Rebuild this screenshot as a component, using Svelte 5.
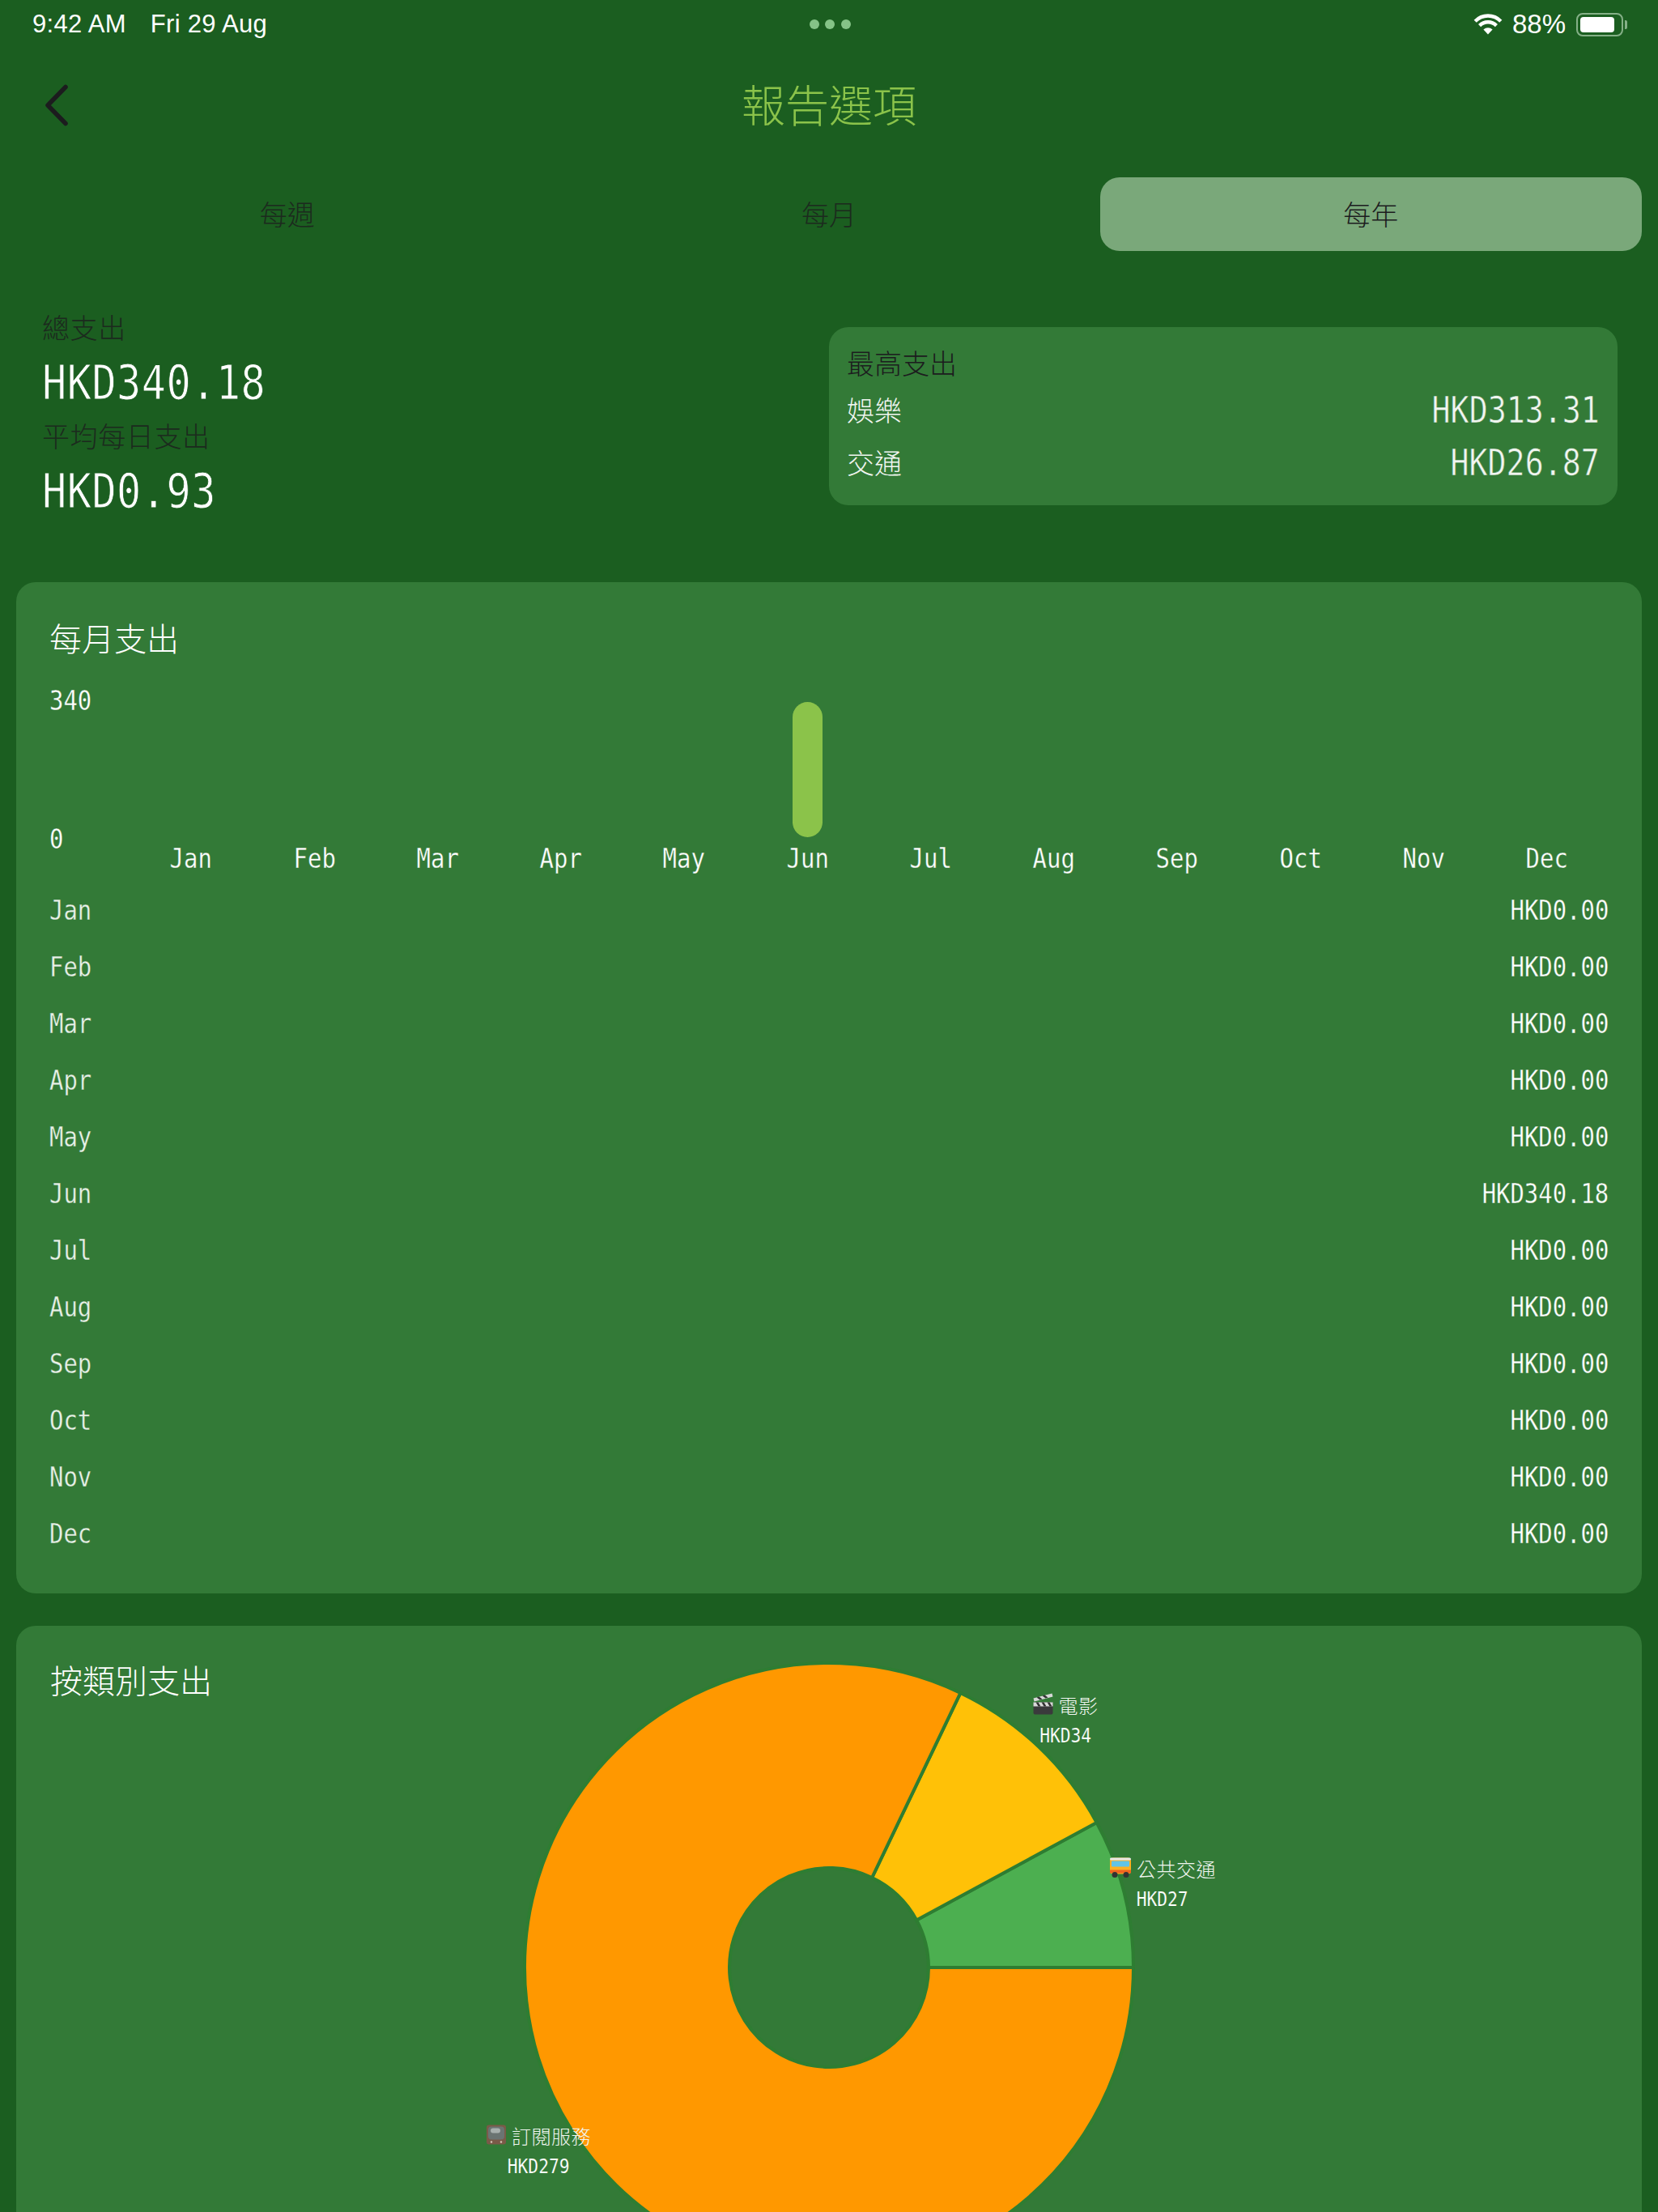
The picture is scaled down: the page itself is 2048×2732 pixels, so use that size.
<script>
	const tabs = ['每週', '每月', '每年'];
	const months = ['Jan', 'Feb', 'Mar', 'Apr', 'May', 'Jun', 'Jul', 'Aug', 'Sep', 'Oct', 'Nov', 'Dec'];
	const monthly = [0, 0, 0, 0, 0, 340.18, 0, 0, 0, 0, 0, 0];

	// pie is drawn anticlockwise from 3 o'clock, card-local coordinates
	const cx = 1004;
	const cy = 422;
	const outer = 376;
	const inner = 123;
	const slices = [
		{ value: 26.87, color: '#4caf50' },
		{ value: 34, color: '#ffc107' },
		{ value: 279.31, color: '#ff9800' }
	];
	const total = slices.reduce((sum, s) => sum + s.value, 0);

	const point = (r, a) => `${(cx + r * Math.cos(a)).toFixed(2)} ${(cy - r * Math.sin(a)).toFixed(2)}`;

	let angle = 0;
	const arcs = slices.map((s) => {
		const from = angle;
		angle += (s.value / total) * Math.PI * 2;
		const large = angle - from > Math.PI ? 1 : 0;
		const d = `M${point(outer, from)} A${outer} ${outer} 0 ${large} 0 ${point(outer, angle)} L${point(inner, angle)} A${inner} ${inner} 0 ${large} 1 ${point(inner, from)} Z`;
		return { d, color: s.color };
	});

	const labels = [
		{ icon: 'clapper', name: '電影', amount: 'HKD34', x: 1296, y: 115 },
		{ icon: 'bus', name: '公共交通', amount: 'HKD27', x: 1416, y: 317 },
		{ icon: 'tv', name: '訂閱服務', amount: 'HKD279', x: 645, y: 647 }
	];
</script>

<div class="screen">
	<div class="status">
		<div class="status-left">
			<span>9:42 AM</span>
			<span>Fri 29 Aug</span>
		</div>
		<div class="dots"><i></i><i></i><i></i></div>
		<div class="status-right">
			<svg class="wifi" width="36" height="26" viewBox="0 0 36 26" fill="none" stroke="#fff" stroke-width="4.4">
				<path d="M2.2 9.2a22 22 0 0 1 31.6 0" />
				<path d="M7.6 14.6a14.6 14.6 0 0 1 20.8 0" />
				<path d="M18 25.6l-5.6-6a8 8 0 0 1 11.2 0z" fill="#fff" stroke="none" />
			</svg>
			<span class="pct">88%</span>
			<div class="battery"><div class="battery-fill"></div></div>
			<div class="battery-nub"></div>
		</div>
	</div>

	<header class="nav">
		<svg class="back" width="30" height="52" viewBox="0 0 30 52" fill="none" stroke="#1c1c1e" stroke-width="5.5" stroke-linecap="round" stroke-linejoin="round">
			<path d="M26 3.5L4 26l22 22.5" />
		</svg>
		<h1>報告選項</h1>
	</header>

	<div class="tabs">
		{#each tabs as tab, i}
			<div class="tab" class:active={i === 2}>{tab}</div>
		{/each}
	</div>

	<section class="summary">
		<div class="totals">
			<div class="total-line dark">總支出</div>
			<div class="total-line"><span class="mono big">HKD340.18</span></div>
			<div class="total-line dark">平均每日支出</div>
			<div class="total-line"><span class="mono big">HKD0.93</span></div>
		</div>
		<div class="top-spend">
			<div class="top-title">最高支出</div>
			<div class="top-row"><span>娛樂</span><span class="mono mid end">HKD313.31</span></div>
			<div class="top-row"><span>交通</span><span class="mono mid end">HKD26.87</span></div>
		</div>
	</section>

	<section class="card monthly">
		<h2>每月支出</h2>
		<div class="chart">
			<div class="y-axis">
				<span class="mono small">340</span>
				<span class="mono small">0</span>
			</div>
			<div class="plot">
				{#each months as month, i}
					<div class="col">
						<div class="bar-slot">
							{#if monthly[i] > 0}
								<div class="bar"></div>
							{/if}
						</div>
						<span class="mono small mid-origin">{month}</span>
					</div>
				{/each}
			</div>
		</div>
		<div class="list">
			{#each months as month, i}
				<div class="list-row">
					<span class="mono small dim">{month}</span>
					<span class="mono small end">HKD{monthly[i].toFixed(2)}</span>
				</div>
			{/each}
		</div>
	</section>

	<section class="card category">
		<h2>按類別支出</h2>
		<svg class="pie" width="2008" height="800" viewBox="0 0 2008 800">
			{#each arcs as arc}
				<path d={arc.d} fill={arc.color} stroke="#2e7d32" stroke-width="4" />
			{/each}
		</svg>
		{#each labels as label}
			<div class="pie-label" style="left:{label.x}px;top:{label.y}px">
				<div class="pie-name">
					{#if label.icon === 'clapper'}
						<svg width="26" height="28" viewBox="0 0 26 28">
							<rect x="1" y="12" width="24" height="15" rx="2" fill="#3a3a3c" />
							<rect x="1" y="12" width="24" height="5" fill="#d8d8d8" />
							<path d="M4 12l3 5h3l-3-5zM11 12l3 5h3l-3-5zM18 12l3 5h3l-3-5z" fill="#333" />
							<path d="M1 7l23-6 1 4-23 6z" fill="#d8d8d8" />
							<path d="M5 6l4 3 3-1-4-3zM12 4l4 3 3-1-4-3z" fill="#333" />
						</svg>
					{:else if label.icon === 'bus'}
						<svg width="28" height="26" viewBox="0 0 28 26">
							<rect x="1" y="1" width="26" height="20" rx="4" fill="#ffb020" />
							<rect x="1" y="1" width="26" height="3" rx="1.5" fill="#e8e8e8" />
							<rect x="3" y="5" width="22" height="7" rx="1" fill="#62c4e6" />
							<rect x="1" y="16" width="26" height="4" fill="#f0651f" />
							<circle cx="7" cy="22" r="3.5" fill="#333" />
							<circle cx="21" cy="22" r="3.5" fill="#333" />
						</svg>
					{:else}
						<svg width="26" height="26" viewBox="0 0 26 26">
							<rect x="1" y="1" width="24" height="24" rx="3" fill="#7a5a48" />
							<rect x="3" y="3" width="20" height="16" rx="4" fill="#6b7472" />
							<rect x="6" y="5" width="12" height="6" rx="3" fill="#a8b0ae" />
							<circle cx="7" cy="22" r="1.2" fill="#d8c8b8" />
							<circle cx="19" cy="22" r="1.2" fill="#d8c8b8" />
						</svg>
					{/if}
					<span>{label.name}</span>
				</div>
				<span class="mono tiny mid-origin">{label.amount}</span>
			</div>
		{/each}
	</section>
</div>

<style>
	:global(body) {
		margin: 0;
		background: #1b5e20;
	}

	.screen {
		width: 2048px;
		height: 2732px;
		overflow: hidden;
		background: #1b5e20;
		color: #fff;
		font-family: 'Noto Sans CJK TC', sans-serif;
		font-weight: 300;
	}

	/* the app's font is narrow and hairline: squeeze the mono and shave the strokes
	   a little with a stroke in the surface colour */
	.mono {
		display: inline-block;
		font-family: 'DejaVu Sans Mono', monospace;
		font-weight: 400;
		transform: scaleX(0.85);
		transform-origin: left center;
		white-space: nowrap;
		-webkit-text-stroke: 0.35px #337a37;
	}
	.mono.end {
		transform-origin: right center;
	}
	.mono.mid-origin {
		transform-origin: center;
	}
	.big {
		font-size: 59px;
		padding-top: 4px;
		-webkit-text-stroke: 0.9px #1b5e20;
	}
	.mid {
		font-size: 45px;
		padding-top: 2px;
		-webkit-text-stroke: 0.6px #337a37;
	}
	.small {
		font-size: 34px;
		line-height: 36px;
		margin-top: -3px;
	}
	.tiny {
		font-size: 25px;
		line-height: 30px;
		-webkit-text-stroke: 0.2px #337a37;
	}
	.dim {
		color: #e8f1e8;
	}

	.status {
		height: 60px;
		display: grid;
		grid-template-columns: 1fr auto 1fr;
		align-items: center;
		padding: 0 38px 0 40px;
		font-family: 'Liberation Sans', sans-serif;
		font-size: 31px;
		font-weight: 400;
	}
	.status-left {
		display: flex;
		gap: 30px;
		letter-spacing: 0.3px;
	}
	.dots {
		display: flex;
		gap: 7.5px;
	}
	.dots i {
		width: 12px;
		height: 12px;
		border-radius: 50%;
		background: #85c387;
	}
	.status-right {
		display: flex;
		align-items: center;
		justify-content: flex-end;
	}
	.wifi {
		margin-right: 12px;
	}
	.pct {
		font-size: 33px;
		margin-right: 13px;
	}
	.battery {
		width: 58px;
		height: 29px;
		box-sizing: border-box;
		border: 2px solid #85b087;
		border-radius: 8px;
		padding: 3px;
	}
	.battery-fill {
		width: 88%;
		height: 100%;
		background: #fff;
		border-radius: 4px;
	}
	.battery-nub {
		width: 3px;
		height: 11px;
		margin-left: 2px;
		background: #85b087;
		border-radius: 0 2px 2px 0;
	}

	.nav {
		position: relative;
		height: 140px;
		display: flex;
		align-items: center;
		justify-content: center;
	}
	.back {
		position: absolute;
		left: 55px;
		top: 44px;
	}
	h1 {
		margin: 0 0 6px;
		font-size: 54px;
		font-weight: 300;
		color: #8bc34a;
	}

	.tabs {
		display: grid;
		grid-template-columns: repeat(3, 1fr);
		margin: 19px 20px 0;
		height: 91px;
	}
	.tab {
		display: flex;
		align-items: center;
		justify-content: center;
		padding-bottom: 3px;
		box-sizing: border-box;
		font-size: 34px;
		color: #1c2a1e;
		border-radius: 24px;
	}
	.tab.active {
		background: #7aa87a;
		color: #1c1c1e;
	}

	.summary {
		display: flex;
		padding: 60px 50px 0 52px;
		height: 409px;
		box-sizing: border-box;
	}
	.totals {
		flex: 0 0 972px;
	}
	.total-line {
		height: 67px;
		display: flex;
		align-items: center;
		font-size: 34px;
		letter-spacing: 0.6px;
	}
	.dark {
		color: #1c2a1e;
	}
	.top-spend {
		flex: 1;
		height: 220px;
		margin-top: 34px;
		box-sizing: border-box;
		padding: 19px 22px 19px;
		background: #337a37;
		border-radius: 24px;
	}
	.top-title {
		height: 50px;
		line-height: 50px;
		font-size: 34px;
		color: #1c1c1e;
	}
	.top-row {
		height: 65px;
		display: flex;
		align-items: center;
		justify-content: space-between;
		font-size: 34px;
		color: #f0f5f0;
	}

	.card {
		margin: 0 20px;
		background: #337a37;
		border-radius: 24px;
		box-sizing: border-box;
	}
	h2 {
		margin: 0;
		height: 60px;
		line-height: 60px;
		font-size: 40px;
		font-weight: 300;
		transform: translateY(-3px);
	}
	.monthly {
		height: 1249px;
		padding: 41px 41px 0 41px;
	}
	.chart {
		display: grid;
		grid-template-columns: 99px 1fr;
		margin-top: 30px;
	}
	.y-axis {
		height: 204px;
		display: flex;
		flex-direction: column;
		justify-content: space-between;
	}
	.plot {
		display: grid;
		grid-template-columns: repeat(12, 1fr);
		padding-top: 17px;
	}
	.col {
		display: flex;
		flex-direction: column;
		align-items: center;
	}
	.bar-slot {
		height: 167px;
		margin-bottom: 11px;
		display: flex;
	}
	.bar {
		width: 37px;
		height: 100%;
		background: #8bc34a;
		border-radius: 19px;
	}
	.list {
		margin-top: 12px;
	}
	.list-row {
		height: 70px;
		display: flex;
		align-items: center;
		justify-content: space-between;
	}

	.category {
		position: relative;
		height: 800px;
		margin-top: 40px;
		padding: 39px 42px 0;
	}
	.pie {
		position: absolute;
		left: 0;
		top: 0;
	}
	.pie-label {
		position: absolute;
		transform: translate(-50%, -50%);
		display: flex;
		flex-direction: column;
		align-items: center;
		gap: 7px;
		white-space: nowrap;
	}
	.pie-name {
		display: flex;
		align-items: center;
		gap: 6px;
		height: 34px;
		font-size: 24px;
		letter-spacing: 0.5px;
		color: #f0f5f0;
	}
</style>
